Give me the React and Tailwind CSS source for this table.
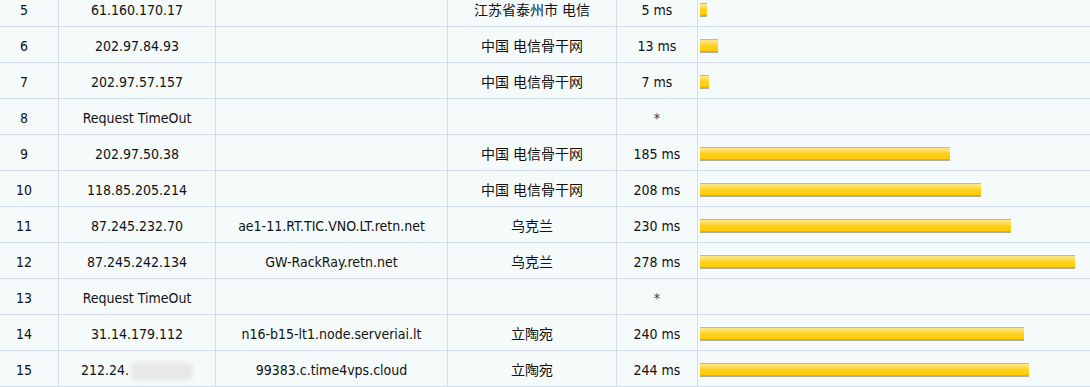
import React from 'react';

const hops = [
  { n: 5, ip: '61.160.170.17', host: '', loc: '江苏省泰州市 电信', ms: 5 },
  { n: 6, ip: '202.97.84.93', host: '', loc: '中国 电信骨干网', ms: 13 },
  { n: 7, ip: '202.97.57.157', host: '', loc: '中国 电信骨干网', ms: 7 },
  { n: 8, ip: 'Request TimeOut', host: '', loc: '', ms: null },
  { n: 9, ip: '202.97.50.38', host: '', loc: '中国 电信骨干网', ms: 185 },
  { n: 10, ip: '118.85.205.214', host: '', loc: '中国 电信骨干网', ms: 208 },
  { n: 11, ip: '87.245.232.70', host: 'ae1-11.RT.TIC.VNO.LT.retn.net', loc: '乌克兰', ms: 230 },
  { n: 12, ip: '87.245.242.134', host: 'GW-RackRay.retn.net', loc: '乌克兰', ms: 278 },
  { n: 13, ip: 'Request TimeOut', host: '', loc: '', ms: null },
  { n: 14, ip: '31.14.179.112', host: 'n16-b15-lt1.node.serveriai.lt', loc: '立陶宛', ms: 240 },
  { n: 15, ip: '212.24.', host: '99383.c.time4vps.cloud', loc: '立陶宛', ms: 244, masked: true },
];

function Bar({ ms }) {
  if (ms == null) return null;
  return (
    <div
      className="mt-[3px] h-[14px] border-t border-[#f0c000] border-b-2 border-b-[#b3ad9c] bg-linear-to-b from-[#ffe986] via-[#ffd31c] to-[#ffcc00]"
      style={{ width: Math.round(ms * 1.35) }}
    />
  );
}

function Row({ hop }) {
  return (
    <div className="flex h-[36px] border-b border-[#d3dcea]">
      <div className="w-[59px] shrink-0 border-r border-[#d3dcea] flex items-center justify-center pr-[10px] pt-[4px]">
        {hop.n}
      </div>
      <div className="w-[157px] shrink-0 border-r border-[#d3dcea] flex items-center justify-center pt-[4px]">
        {hop.ip}
        {hop.masked && (
          <span className="inline-block w-[62px] h-[18px] ml-[2px] rounded-[6px] bg-[#e8e8e8] blur-[2px]" />
        )}
      </div>
      <div className="w-[232px] shrink-0 border-r border-[#d3dcea] flex items-center justify-center pt-[4px]">
        {hop.host}
      </div>
      <div className="w-[169px] shrink-0 border-r border-[#d3dcea] flex items-center justify-center pt-[4px]">
        {hop.loc}
      </div>
      <div className="w-[81px] shrink-0 border-r border-[#d3dcea] flex items-center justify-center pt-[4px]">
        {hop.ms == null ? <span className="text-[#1a3a5a]">*</span> : `${hop.ms} ms`}
      </div>
      <div className="flex-1 flex items-center pl-[2px]">
        <Bar ms={hop.ms} />
      </div>
    </div>
  );
}

export default function App() {
  return (
    <div className="w-[1090px] h-[387px] overflow-hidden bg-[#f5fafb] text-[14px] text-[#111] font-['DejaVu_Sans_Condensed','Noto_Sans_CJK_SC',sans-serif]">
      <div className="-mt-[9px]">
        {hops.map((hop) => (
          <Row key={hop.n} hop={hop} />
        ))}
      </div>
    </div>
  );
}
